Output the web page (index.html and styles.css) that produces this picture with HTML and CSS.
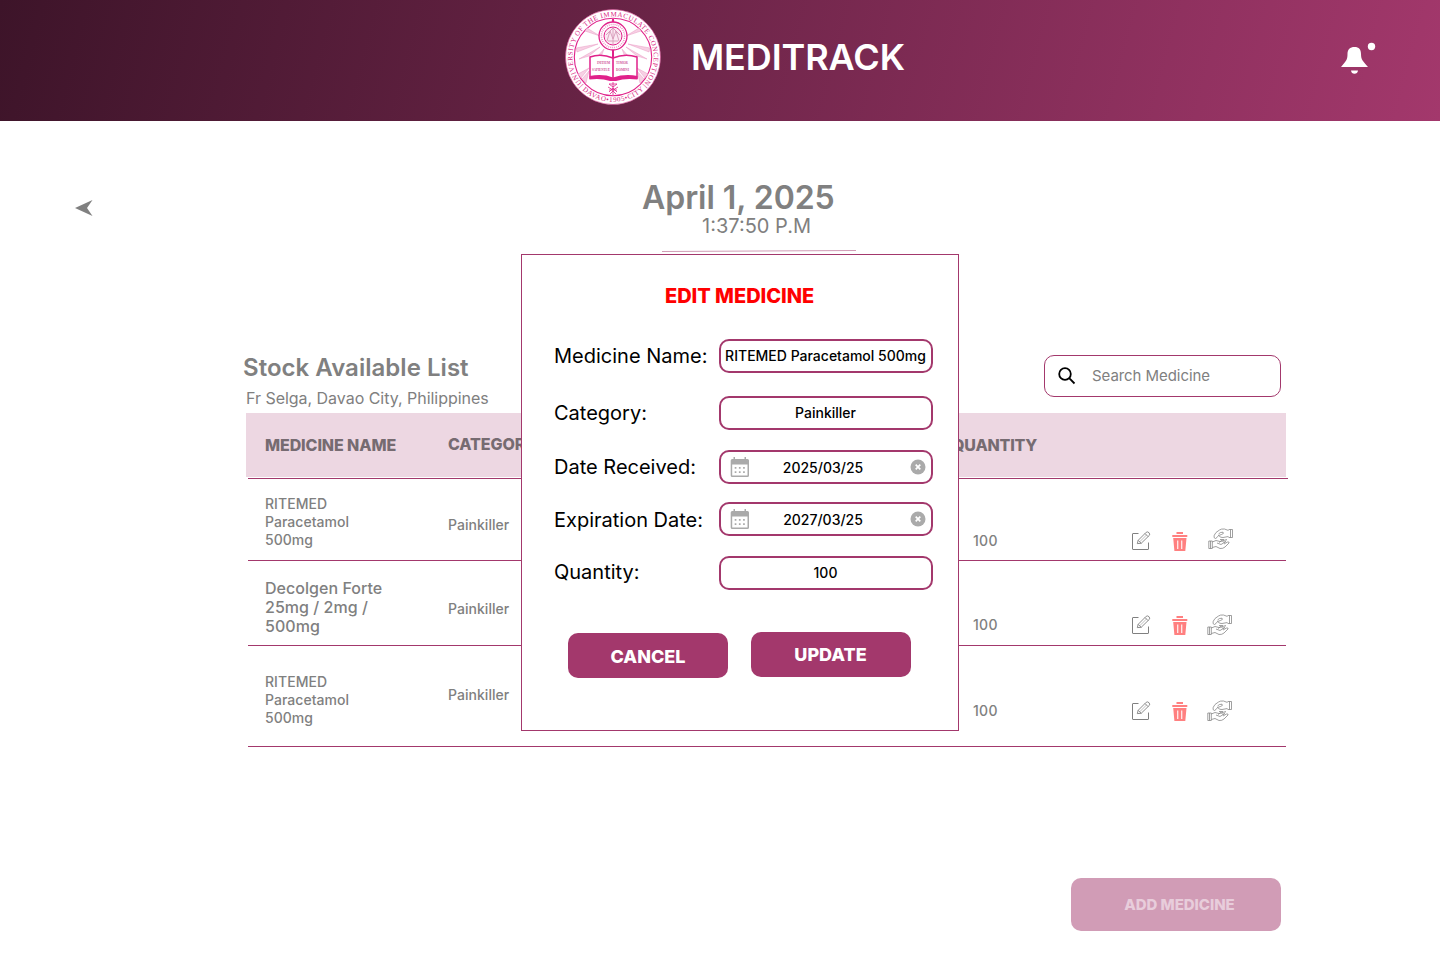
FILE: index.html
```html
<!DOCTYPE html>
<html lang="en">
<head>
<meta charset="utf-8">
<title>Meditrack</title>
<link rel="stylesheet" href="styles.css">
</head>
<body>
<svg class="defs" width="0" height="0" aria-hidden="true">
  <symbol id="edit" viewBox="0 0 20 20">
    <g fill="none" stroke="#808080" stroke-width="1">
      <path d="M7.500 2.500H2Q1.500 2.500 1.500 3V18Q1.500 18.500 2 18.500H17Q17.500 18.500 17.500 18V11.500"/>
      <path stroke-width=".9" d="M6.300 12.600L7.200 9.300L15.200 1.300Q16.500 .3 18 1.700Q19.300 3.200 18.300 4.400L10.200 12.300ZM7.200 9.300L10.200 12.300M14 2.500L17 5.600"/>
      <path stroke-width=".5" d="M8.700 10.800L15.500 4"/>
    </g>
  </symbol>
  <symbol id="trash" viewBox="0 0 16 20">
    <path fill="#ff8080" d="M4.500 0H11V2H4.500ZM.3 3H15.300V5H.3ZM1.200 6H14.500L13.300 19H2.400ZM5.200 8.500V17H6.300V8.500ZM9.200 8.500V17H10.300V8.500Z" fill-rule="evenodd"/>
  </symbol>
  <symbol id="give" viewBox="0 0 26 22">
    <g fill="none" stroke="#808080" stroke-width=".75" stroke-linejoin="round">
      <path d="M20.500 1.500H24.500V9.500H20.500M22.500 1.500V9.500M20.500 2.500L16.500 1Q13 .7 11.500 2L8 4.500Q5.500 7.500 6 9.500Q7.500 11.500 9 9.500L10.500 7.500Q13 10 15 9.500L20.500 8.500M10.500 6Q12 4 15 4.200Q16.500 5.500 13.500 6.500L10.500 7.500"/>
      <path d="M.8 13H4.300V20.500H.8ZM2.500 13V20.500M4.300 14L8 12.500L12 13.500M4.300 19.500L8 18.500L12 20.500Q15 20.800 17 19L21 15Q21.500 13.500 19.500 14L16 16M12 13.500L19 11.500M9 15L13 16.500L18 13.500M12 11.500L16 11.500M11 14.500L14 12.500L16 14.500L18 12.500"/>
    </g>
  </symbol>
  <symbol id="calendar" viewBox="0 0 20 20">
    <path fill="#aaa" d="M3.500 0H5V2H14.500V0H16V2H17.500Q19 2 19 3.500V18.500Q19 20 17.500 20H2.200Q.7 20 .7 18.500V3.500Q.7 2 2.200 2H3.500Z"/>
    <path fill="#fff" d="M2.200 7.500H17.500V18.500H2.200Z"/>
    <g stroke="#aaa" stroke-width="1.700" stroke-dasharray="1.700 2.500"><path d="M4.700 10.900H16M4.700 15.200H16"/></g>
  </symbol>
  <symbol id="clear" viewBox="0 0 16 16">
    <circle cx="8" cy="8" r="7.500" fill="#aaa"/>
    <path d="M5.700 5.700L10.300 10.300M10.300 5.700L5.700 10.300" stroke="#fff" stroke-width="1.700"/>
  </symbol>
</svg>

<header class="topbar">
  <div class="brand">
    <svg class="seal" viewBox="0 0 96 96">
      <defs>
        <path id="arc-top" d="M17.800 75.200A40.600 40.600 0 1 1 78.200 75.200"/>
        <path id="arc-bottom" d="M12 75A45 45 0 0 0 84 75"/>
      </defs>
      <circle cx="48" cy="48" r="47.500" fill="#fff" stroke="#d4408c" stroke-width=".6"/>
      <circle cx="48" cy="48" r="38.700" fill="none" stroke="#e0218a" stroke-width="1.100"/>
      <g class="rays">
        <path d="M35 27L22 19L20 22ZM33 35L11 39L12 43ZM35 38L14 50L24 47ZM61 27L74 19L76 22ZM63 35L85 39L84 43ZM61 38L82 50L72 47ZM46 20L47 11H49L50 20ZM39 40L32 48L36 48ZM57 40L64 48L60 48ZM24 59L16 69L13 65ZM24 62L21 74L17 70ZM72 59L80 69L83 65ZM72 62L75 74L79 70Z"/>
      </g>
      <path d="M48 10V14M48 41V48" stroke="#e0218a" stroke-width="2"/>
      <circle cx="48" cy="27" r="14" fill="#fff" stroke="#e0218a" stroke-width="1.300"/>
      <circle cx="48" cy="27" r="11.600" fill="none" stroke="#eb7db9" stroke-width="1.500" stroke-dasharray=".8 1.200"/>
      <circle cx="48" cy="27" r="9" fill="#fbe9f3" stroke="#e0218a" stroke-width="1"/>
      <path d="M42 32L45 22L48 30L51 22L54 32M41 26L48 19L55 26M43 32H53M48 19V35" fill="none" stroke="#d79bb9" stroke-width=".9"/>
      <path d="M25 48Q36 44 48 49Q60 44 72 48V69Q60 67 48 70Q36 67 25 69Z" fill="#fff" stroke="#e0218a" stroke-width="1.500"/>
      <path d="M48 48.500V69" stroke="#e0218a" stroke-width="1.600"/>
      <path d="M24.500 67Q38 64.500 48 68.500Q60 64.500 72.500 67V70.500Q60 69 51 72H45Q36 69 24.500 70.500Z" fill="#e0218a"/>
      <g class="book-text">
        <text x="32" y="55" textLength="13">INITIUM</text>
        <text x="27" y="61.500" textLength="18">SAPIENTIÆ</text>
        <text x="51" y="55" textLength="12">TIMOR</text>
        <text x="51" y="61.500" textLength="13">DOMINI</text>
      </g>
      <path d="M44 75L48 78L52 75M43 78L48 81L53 78M44 83L48 79L52 83M48 73V86M45 85L48 82L51 85M44 75H52M44 81H52" fill="none" stroke="#e0218a" stroke-width=".8"/>
      <g class="seal-text">
        <text><textPath href="#arc-top" startOffset="50%" text-anchor="middle" textLength="184">UNIVERSITY OF THE IMMACULATE CONCEPTION</textPath></text>
        <text><textPath href="#arc-bottom" startOffset="50%" text-anchor="middle" textLength="76">| DAVAO•1905•CITY |</textPath></text>
      </g>
    </svg>
    <h1>MEDITRACK</h1>
  </div>
  <svg class="bell" viewBox="0 0 36 34">
    <path fill="#fff" d="M1 25C6 19 7.500 18 7.500 12C7.500 7.500 10 5 14.500 5C19 5 21 7.500 21 12C21 18 23 19 28 25ZM11 28.500H18Q17.500 31.800 14.500 31.800Q11.500 31.800 11 28.500Z"/>
    <circle cx="31.500" cy="4.500" r="3.700" fill="#fff"/>
  </svg>
</header>

<main class="page">
  <svg class="back" viewBox="0 0 18 16"><path fill="#808080" d="M0 8L17.500 0L12 8L17.500 16Z"/></svg>
  <div class="clock">
    <h2>April 1, 2025</h2>
    <p>1:37:50 P.M</p>
    <svg class="clock-line" viewBox="0 0 194 2"><path d="M0 1.500L194 .5" stroke="#d19cb6"/></svg>
  </div>

  <section class="stock">
    <div class="stock-head">
      <div>
        <h3>Stock Available List</h3>
        <p>Fr Selga, Davao City, Philippines</p>
      </div>
      <div class="search">
        <svg viewBox="0 0 18 18"><circle cx="7" cy="7" r="5.800" fill="none" stroke="#000" stroke-width="1.800"/><path d="M11.200 11.200L16.500 16.500" stroke="#000" stroke-width="1.800"/></svg>
        <span>Search Medicine</span>
      </div>
    </div>
    <div class="table-head">
      <span>MEDICINE NAME</span><span class="cat">CATEGORY</span><span class="qty">QUANTITY</span>
    </div>
    <div class="rows">
      <div class="row row-a">
        <p class="name">RITEMED<br>Paracetamol<br>500mg</p><p class="type">Painkiller</p><p class="count">100</p>
        <div class="actions"><svg class="edit"><use href="#edit"/></svg><svg class="trash"><use href="#trash"/></svg><svg class="give"><use href="#give"/></svg></div>
      </div>
      <div class="row row-b">
        <p class="name large">Decolgen Forte<br>25mg / 2mg /<br>500mg</p><p class="type">Painkiller</p><p class="count">100</p>
        <div class="actions"><svg class="edit"><use href="#edit"/></svg><svg class="trash"><use href="#trash"/></svg><svg class="give"><use href="#give"/></svg></div>
      </div>
      <div class="row row-c">
        <p class="name">RITEMED<br>Paracetamol<br>500mg</p><p class="type">Painkiller</p><p class="count">100</p>
        <div class="actions"><svg class="edit"><use href="#edit"/></svg><svg class="trash"><use href="#trash"/></svg><svg class="give"><use href="#give"/></svg></div>
      </div>
    </div>
  </section>
  <button class="add">ADD MEDICINE</button>
</main>

<div class="modal">
  <h2>EDIT MEDICINE</h2>
  <div class="form">
    <div class="line"><span class="label">Medicine Name:</span><div class="field">RITEMED Paracetamol 500mg</div></div>
    <div class="line"><span class="label">Category:</span><div class="field">Painkiller</div></div>
    <div class="line"><span class="label">Date Received:</span><div class="field date"><svg class="calendar"><use href="#calendar"/></svg><span>2025/03/25</span><svg class="clear"><use href="#clear"/></svg></div></div>
    <div class="line expiry"><span class="label">Expiration Date:</span><div class="field date"><svg class="calendar"><use href="#calendar"/></svg><span>2027/03/25</span><svg class="clear"><use href="#clear"/></svg></div></div>
    <div class="line amount"><span class="label">Quantity:</span><div class="field">100</div></div>
  </div>
  <div class="buttons"><button class="cancel">CANCEL</button><button class="update">UPDATE</button></div>
</div>
</body>
</html>
```
FILE: styles.css
```css
* { box-sizing: border-box; }
body { margin: 0; width: 1440px; height: 980px; overflow: hidden; position: relative; background: #fff; color: #808080; font-family: Inter, sans-serif; }
h1, h2, h3, p { margin: 0; }
svg { display: block; }
button { border: 0; padding: 0; font-family: inherit; }
.defs { position: absolute; }

.topbar { height: 121px; padding: 9px 64px 0 565px; display: flex; justify-content: space-between; background: linear-gradient(105deg, #3d1429 0%, #a3386c 100%); }
.brand { display: flex; gap: 30px; height: 96px; align-items: center; }
.seal { width: 96px; height: 96px; }
.rays { fill: #f7d0e4; stroke: #e58bbb; stroke-width: .4; }
.seal-text { font: 7px "Liberation Serif", serif; fill: #d81b80; }
.book-text { font: bold 3.3px "Liberation Serif", serif; fill: #d0589a; }
.topbar h1 { font-size: 36px; font-weight: 600; line-height: 44px; letter-spacing: -.1px; color: #fff; }
.bell { width: 36px; height: 34px; margin-top: 33px; }

.page { padding: 59px 0 0; display: grid; grid-template-columns: 246px 1042px; }
.back { width: 18px; height: 16px; margin: 20px 0 0 75px; }
.clock { padding-left: 396px; height: 173px; }
.clock h2 { font-size: 32px; font-weight: 600; line-height: 36px; letter-spacing: -.05px; }
.clock p { font-size: 20px; line-height: 20px; margin: 0 0 0 60px; }
.clock-line { width: 194px; height: 2px; margin: 14px 0 0 20px; }

.stock { grid-column: 2; }
.stock-head { display: flex; justify-content: space-between; height: 60px; padding-right: 7px; }
.stock-head h3 { font-size: 24px; font-weight: 600; line-height: 30px; margin-left: -3px; letter-spacing: .03px; }
.stock-head p { font-size: 16px; line-height: 20px; margin-top: 5px; letter-spacing: -.03px; }
.search { width: 237px; height: 42px; margin-top: 2px; border: 1px solid #a3386c; border-radius: 10px; display: flex; align-items: center; padding: 0 0 1px 13px; font-size: 15px; letter-spacing: -.06px; gap: 16px; }
.search svg { width: 18px; height: 18px; margin-top: 1px; }
.search span { padding-bottom: 1px; }
.table-head { width: 1040px; height: 64px; margin-bottom: 1px; padding-left: 19px; background: #edd7e2; color: #766b71; display: grid; grid-template-columns: 183px 504px 1fr; align-items: center; font-size: 16px; font-weight: 800; letter-spacing: -.1px; }
.table-head .cat { margin-top: -2px; }
.table-head .qty { letter-spacing: -.2px; }
.rows { margin-left: 2px; border-top: 1px solid #a3386c; }
.row { width: 1038px; display: grid; grid-template-columns: 183px 525px 158px 1fr; align-items: start; padding-left: 17px; border-bottom: 1px solid #a3386c; font-size: 14px; font-weight: 450; line-height: 18px; letter-spacing: .04px; }
.large { font-size: 16px; line-height: 19px; }
.row-a { height: 82px; padding-top: 16px; }
.row-b { height: 85px; padding-top: 18px; }
.row-c { height: 101px; padding-top: 27px; }
.type { margin-top: 21px; }
.count, .actions { margin-top: 37px; }
.count { letter-spacing: .3px; }
.row-c .type { margin-top: 13px; }
.row-c .count, .row-c .actions { margin-top: 29px; }
.actions { display: flex; }
.edit { width: 20px; height: 20px; margin-top: -1px; }
.trash { width: 16px; height: 20px; margin-left: 21px; }
.give { width: 26px; height: 22px; margin: -2px 0 0 19px; }
.row-a .give { margin: -4px 0 0 20px; }
.add { grid-column: 2; width: 210px; height: 53px; margin: 131px 0 0 825px; padding-left: 7px; border-radius: 10px; background: #d19cb6; color: #e8cddb; font-size: 15px; font-weight: 800; letter-spacing: -.06px; }

.modal { position: absolute; left: 521px; top: 254px; width: 438px; height: 477px; border: 1px solid #a3386c; background: #fff; color: #000; padding: 29px 25px 0 32px; }
.modal h2 { color: #f00; font-size: 20px; font-weight: 800; letter-spacing: -.03px; line-height: 24px; margin-left: 111px; white-space: nowrap; }
.form { margin-top: 31px; display: flex; flex-direction: column; }
.line { display: flex; align-items: center; justify-content: space-between; height: 34px; font-size: 20px; white-space: nowrap; }
.line + .line { margin-top: 23px; }
.line + .line:nth-child(3) { margin-top: 20px; }
.line + .expiry { margin-top: 18px; }
.line + .amount { margin-top: 20px; }
.expiry .label { padding-top: 2px; }
.amount .label { padding-bottom: 2px; }
.field { width: 214px; height: 34px; padding: 0 1px 1px 0; border: 2px solid #a3386c; border-radius: 10px; display: flex; align-items: center; justify-content: center; font-size: 14px; font-weight: 500; }
.date { display: grid; grid-template-columns: 20px 1fr 16px; justify-items: center; padding: 0 5px 0 9px; }
.date span { margin-left: -14px; }
.calendar { width: 20px; height: 20px; }
.clear { width: 16px; height: 16px; }
.buttons { display: flex; gap: 23px; padding-left: 14px; margin-top: 42px; }
.buttons button { width: 160px; height: 45px; border-radius: 10px; background: #a3386c; color: #fff; font-size: 18px; font-weight: 800; letter-spacing: 0; }
.buttons .cancel { margin-top: 1px; padding-top: 2px; }
.buttons .update { padding-right: 1px; }
```
